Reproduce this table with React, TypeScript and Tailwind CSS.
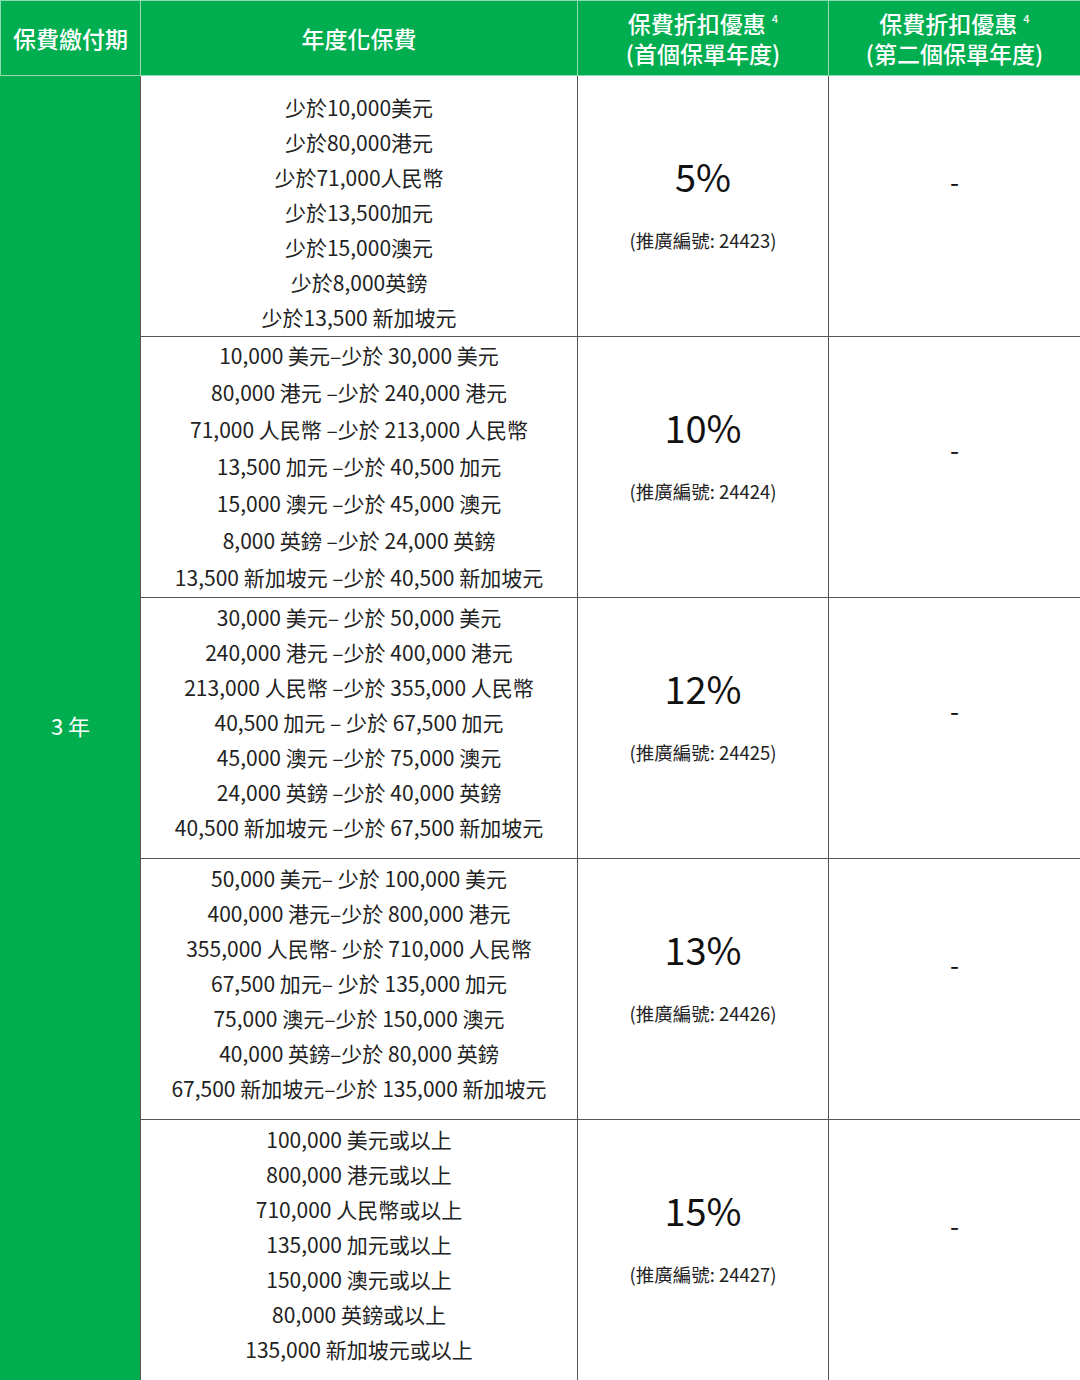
import React from "react";

const ROWS: { lines: string[]; rate: string; code: string }[] = [
  {
    lines: [
      "少於10,000美元",
      "少於80,000港元",
      "少於71,000人民幣",
      "少於13,500加元",
      "少於15,000澳元",
      "少於8,000英鎊",
      "少於13,500 新加坡元",
    ],
    rate: "5%",
    code: "24423",
  },
  {
    lines: [
      "10,000 美元–少於 30,000 美元",
      "80,000 港元 –少於 240,000 港元",
      "71,000 人民幣 –少於 213,000 人民幣",
      "13,500 加元 –少於 40,500 加元",
      "15,000 澳元 –少於 45,000 澳元",
      "8,000 英鎊 –少於 24,000 英鎊",
      "13,500 新加坡元 –少於 40,500 新加坡元",
    ],
    rate: "10%",
    code: "24424",
  },
  {
    lines: [
      "30,000 美元– 少於 50,000 美元",
      "240,000 港元 –少於 400,000 港元",
      "213,000 人民幣 –少於 355,000 人民幣",
      "40,500 加元 – 少於 67,500 加元",
      "45,000 澳元 –少於 75,000 澳元",
      "24,000 英鎊 –少於 40,000 英鎊",
      "40,500 新加坡元 –少於 67,500 新加坡元",
    ],
    rate: "12%",
    code: "24425",
  },
  {
    lines: [
      "50,000 美元– 少於 100,000 美元",
      "400,000 港元–少於 800,000 港元",
      "355,000 人民幣- 少於 710,000 人民幣",
      "67,500 加元– 少於 135,000 加元",
      "75,000 澳元–少於 150,000 澳元",
      "40,000 英鎊–少於 80,000 英鎊",
      "67,500 新加坡元–少於 135,000 新加坡元",
    ],
    rate: "13%",
    code: "24426",
  },
  {
    lines: [
      "100,000 美元或以上",
      "800,000 港元或以上",
      "710,000 人民幣或以上",
      "135,000 加元或以上",
      "150,000 澳元或以上",
      "80,000 英鎊或以上",
      "135,000 新加坡元或以上",
    ],
    rate: "15%",
    code: "24427",
  },
];

const FONT = "font-['Noto_Sans_CJK_TC','Noto_Sans',sans-serif]";

function DiscountHead({ sub }: { sub: string }) {
  return (
    <th className="border border-[#8fdcb0] font-medium">
      <div className="flex justify-center items-start">
        <span>保費折扣優惠</span>
        <span className="text-[11px] leading-[14px] ml-[6px] mt-[3px]">4</span>
      </div>
      <div>{sub}</div>
    </th>
  );
}

export default function App() {
  return (
    <div className={`w-[1080px] h-[1380px] bg-white overflow-hidden ${FONT}`}>
      <table className="w-[1080px] border-collapse table-fixed">
        <colgroup>
          <col className="w-[140px]" />
          <col className="w-[437px]" />
          <col className="w-[251px]" />
          <col className="w-[252px]" />
        </colgroup>
        <thead>
          <tr className="h-[75px] bg-[#00ae4f] text-white text-[23px] leading-[30px]">
            <th className="border border-[#8fdcb0] font-medium">保費繳付期</th>
            <th className="border border-[#8fdcb0] font-medium">年度化保費</th>
            <DiscountHead sub="(首個保單年度)" />
            <DiscountHead sub="(第二個保單年度)" />
          </tr>
        </thead>
        <tbody>
          {ROWS.map((row, i) => (
            <tr key={row.code} className="h-[261px]">
              {i === 0 && (
                <td
                  rowSpan={5}
                  className="bg-[#00ae4f] border border-[#00ae4f] border-r-[#555] text-white text-[22px] text-center align-middle pb-[5px]"
                >
                  3 年
                </td>
              )}
              <td
                className={`border border-[#555] text-center align-top text-[21px] text-[#222] ${
                  i === 0 ? "pt-[14px]" : i === 1 ? "pt-[0px]" : "pt-[2px]"
                }`}
              >
                <div
                  className={`h-[230px] ${i === 1 ? "leading-[37px]" : "leading-[35px]"}`}
                >
                  {row.lines.map((l) => (
                    <div key={l}>{l}</div>
                  ))}
                </div>
              </td>
              <td
                className={`border border-[#555] text-center align-top text-[#111] ${
                  i === 0 ? "pt-[77px]" : "pt-[67px]"
                }`}
              >
                <div className="h-[150px] flex flex-col items-center">
                  <div className="text-[38px] leading-[46px]">{row.rate}</div>
                  <div className="text-[18.5px] leading-[24px] mt-[29px] text-[#222]">
                    (推廣編號: {row.code})
                  </div>
                </div>
              </td>
              <td
                className={`border border-[#555] text-center align-top text-[26px] text-[#111] ${
                  i === 0 ? "pt-[88px]" : i === 1 || i === 2 ? "pt-[95px]" : "pt-[88px]"
                }`}
              >
                <div className="h-[120px] leading-[34px]">-</div>
              </td>
            </tr>
          ))}
        </tbody>
      </table>
    </div>
  );
}
